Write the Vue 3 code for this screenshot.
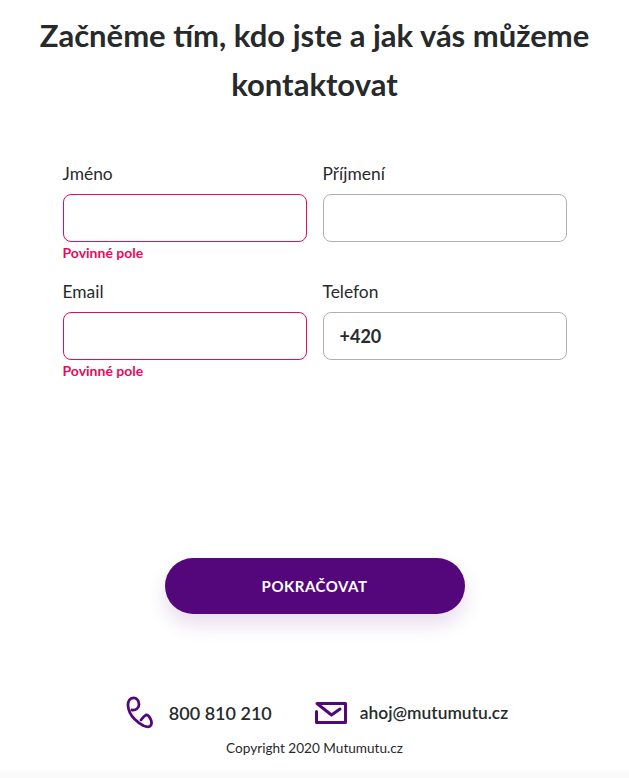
<template>
  <div class="page">
    <h1>Začněme tím, kdo jste a jak vás můžeme kontaktovat</h1>

    <form class="form" @submit.prevent>
      <div v-for="field in fields" :key="field.label" class="field">
        <label>{{ field.label }}</label>
        <input :class="{ invalid: field.error }" :value="field.value" type="text" />
        <span v-if="field.error" class="error">Povinné pole</span>
      </div>
    </form>

    <button class="next" type="button">POKRAČOVAT</button>

    <footer>
      <div class="contacts">
        <a class="contact phone">
          <svg width="27" height="33" viewBox="0 0 27 33" fill="none" stroke="#54077a" stroke-width="2.8" stroke-linecap="round" stroke-linejoin="round">
            <path d="M6 14 C10 14.5 13 12 13 8.5 C13 4.5 10.5 1.8 7.5 1.8 C4 1.8 1.8 5 2 9.5 C2.3 15 5 19.5 8.5 23 C11 25.5 14 28 17.5 29.8 C20.5 31 24 31.5 25 29 C26 27 25.5 24.5 24 22 C22.8 20 21.5 18.5 20 19 C18 20 16.5 22 15 24" />
          </svg>
          <span>800 810 210</span>
        </a>
        <a class="contact mail">
          <svg width="32" height="22" viewBox="0 0 32 22" fill="none" stroke="#54077a" stroke-width="3" stroke-linecap="round" stroke-linejoin="round">
            <path d="M1.5 9.5 V20.5 H30.5 V1.5 H2 L16.5 13 L25 7" />
          </svg>
          <span class="email">ahoj@mutumutu.cz</span>
        </a>
      </div>
      <p class="copyright">Copyright 2020 Mutumutu.cz</p>
    </footer>
  </div>
</template>

<script setup>
const fields = [
  { label: 'Jméno', value: '', error: true },
  { label: 'Příjmení', value: '', error: false },
  { label: 'Email', value: '', error: true },
  { label: 'Telefon', value: '+420', error: false }
]
</script>

<style>
html,
body {
  margin: 0;
  background: #fff;
}
</style>

<style scoped>
.page {
  box-sizing: border-box;
  width: 629px;
  height: 778px;
  overflow: hidden;
  display: flex;
  flex-direction: column;
  align-items: center;
  font-family: Lato, "Open Sans", sans-serif;
  color: #272a2b;
  background: linear-gradient(#fff 770px, #fafafa 772px);
}

h1 {
  margin: 11px 0 0;
  width: 570px;
  text-align: center;
  font-size: 31px;
  line-height: 49px;
  font-weight: 700;
}

.form {
  margin-top: 53px;
  width: 504px;
  height: 236px;
  display: grid;
  grid-template-columns: 244px 244px;
  grid-auto-rows: 118px;
  column-gap: 16px;
}

.field {
  display: flex;
  flex-direction: column;
}

label {
  font-size: 17.4px;
  line-height: 24px;
  margin-bottom: 8px;
}

input {
  box-sizing: border-box;
  width: 244px;
  height: 48px;
  padding: 0 16px;
  border: 1px solid #b0b0b0;
  border-radius: 8px;
  font: 700 18px Lato, sans-serif;
  color: #272a2b;
  outline: none;
}

input.invalid {
  border-color: #ea0a59;
}

.error {
  margin-top: 2px;
  font-size: 14px;
  line-height: 18px;
  font-weight: 700;
  color: #ea0a59;
}

.next {
  margin-top: 160px;
  width: 300px;
  height: 56px;
  border: none;
  border-radius: 28px;
  background: #54077a;
  color: #fff;
  font: 700 15px Lato, sans-serif;
  letter-spacing: 0.5px;
  box-shadow: 0 10px 20px rgba(84, 7, 122, 0.14);
}

footer {
  margin-top: 82px;
  display: flex;
  flex-direction: column;
  align-items: center;
}

.contacts {
  display: flex;
  align-items: center;
  gap: 43px;
  margin-left: 5px;
}

.contact {
  display: flex;
  align-items: center;
  font-size: 18px;
  font-weight: 600;
}

.email {
  font-size: 17.4px;
}

.phone {
  gap: 16px;
}

.mail {
  gap: 13px;
}

.copyright {
  margin: 10px 0 0;
  font-size: 13.6px;
  line-height: 18px;
}
</style>
